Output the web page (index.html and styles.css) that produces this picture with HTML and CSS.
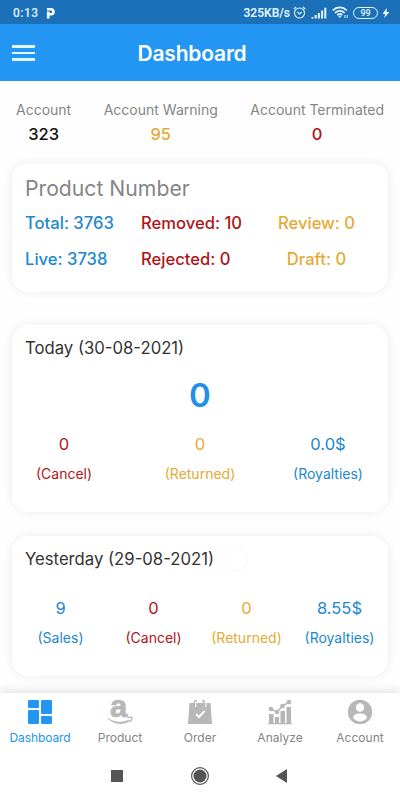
FILE: index.html
```
<!DOCTYPE html>
<html lang="en">
<head>
    <meta charset="UTF-8">
    <meta name="viewport" content="width=device-width, initial-scale=1">
    <title>Dashboard</title>
    <link rel="stylesheet" href="styles.css">
</head>
<body>
    <div class="status-bar">
        <span class="time">0:13</span>
        <svg class="p-icon" width="10" height="12" viewBox="0 0 10 12"><path d="M2.2 11.5V7M1 2.200H5a2.300 2.300 0 0 1 0 5H2.200V4.500" fill="none" stroke="#fff" stroke-width="2.600"/></svg>
        <span class="speed">325KB/s</span>
        <svg class="alarm" width="13" height="13" viewBox="0 0 13 13" fill="none" stroke="#e3f6ff" stroke-width="1.1"><circle cx="6.5" cy="7" r="5"/><path d="M.8 3 3.2 1M12.2 3 9.8 1M4.3 6l2.2 2 2.3-2"/></svg>
        <svg class="signal" width="16" height="12" viewBox="0 0 16 12" stroke="#e3f6ff" stroke-width="2"><path d="M1.500 11.500V10M4.700 11.500V8M7.900 11.500V6M11.100 11.500V3.500M14.300 11.500V.8"/></svg>
        <svg class="wifi" width="17" height="13" viewBox="0 0 17 13"><g fill="none" stroke="#e3f6ff" stroke-width="1.7"><path d="M.8 4.300a10 10 0 0 1 14 0M3 6.800a7 7 0 0 1 9.600 0M5.200 9.100a4 4 0 0 1 5.200 0"/><path d="M13 9v3M15.200 9v3" stroke-width="1"/></g><path d="m7.800 12-1.700-2q1.700-1 3.400 0z" fill="#e3f6ff"/></svg>
        <span class="battery">99</span>
        <svg class="bolt" width="8" height="12" viewBox="0 0 8 12"><path d="M5 .8.500 7h2.800L2 11.200 7.400 5H4.300z" fill="#fff"/></svg>
    </div>

    <header class="app-bar">
        <div class="menu"><i></i><i></i><i></i></div>
        <h1>Dashboard</h1>
    </header>

    <main>
        <div class="accounts">
            <div>Account<b class="black">323</b></div>
            <div>Account Warning<b class="yellow">95</b></div>
            <div>Account Terminated<b class="red">0</b></div>
        </div>

        <section class="card products">
            <h2>Product Number</h2>
            <div class="product-grid">
                <span class="blue">Total: 3763</span>
                <span class="red">Removed: 10</span>
                <span class="yellow center">Review: 0</span>
                <span class="blue">Live: 3738</span>
                <span class="red">Rejected: 0</span>
                <span class="yellow center">Draft: 0</span>
            </div>
        </section>

        <section class="card today">
            <h3>Today (30-08-2021)</h3>
            <div class="total">0</div>
            <div class="stats three">
                <div class="red"><b>0</b>(Cancel)</div>
                <div class="yellow"><b>0</b>(Returned)</div>
                <div class="blue"><b>0.0$</b>(Royalties)</div>
            </div>
        </section>

        <section class="card yesterday">
            <h3>Yesterday (29-08-2021)<span class="ripple"></span></h3>
            <div class="stats four">
                <div class="blue"><b>9</b>(Sales)</div>
                <div class="red"><b>0</b>(Cancel)</div>
                <div class="yellow"><b>0</b>(Returned)</div>
                <div class="blue"><b>8.55$</b>(Royalties)</div>
            </div>
        </section>
    </main>

    <nav class="tabs">
        <a class="active">
            <svg width="26" height="26" viewBox="0 0 26 26" fill="currentColor"><rect x="1" y="1" width="11" height="8" rx="1.3"/><rect x="1" y="11" width="11" height="14" rx="1.3"/><rect x="14" y="1" width="11" height="14" rx="1.3"/><rect x="14" y="17" width="11" height="8" rx="1.3"/></svg>
            Dashboard
        </a>
        <a>
            <svg class="amazon" width="26" height="26" viewBox="0 0 26 26"><text class="amazon-a" x="3" y="18">a</text><path d="M.7 19.500q11 6.500 21.500 1.600l.7 1Q11.500 28.500.7 19.500z" fill="#b7b7b7" stroke="#b7b7b7" stroke-width=".6"/><path d="M20.500 18.800q3-1.200 4.500-.4.300 1.900-1.700 4.500" fill="none" stroke="#b7b7b7" stroke-width="1.300"/></svg>
            Product
        </a>
        <a>
            <svg width="26" height="26" viewBox="0 0 26 26"><path d="M2.500 4H23.500L25 25H1z" fill="#b7b7b7"/><g fill="none"><path d="M8.800 8V3.500M18.800 8V3.500" stroke="#fff" stroke-width="1.200"/><path d="M7.300 7.500V4a2.500 2.500 0 0 1 2.700-2.500M17.500 7.500V4A2.500 2.500 0 0 0 15 1.500" stroke="#b7b7b7" stroke-width="1.500"/><path d="m9 15 3 3 5.700-6" stroke="#fff" stroke-width="2"/></g></svg>
            Order
        </a>
        <a>
            <svg width="26" height="26" viewBox="0 0 26 26" fill="#b7b7b7"><path d="M1 24h24v1.200H1zM2 15h4.500v9H2zM8 18h4v6H8zM13.500 12H18v12h-4.500zM19.500 8H24v16h-4.500z"/><path d="m4 10 6 3 5.500-6L22 3" fill="none" stroke="#b7b7b7" stroke-width="1.500"/><circle cx="4" cy="10" r="2.300"/><circle cx="10" cy="13" r="2.300"/><circle cx="15.500" cy="7" r="2.300"/><circle cx="22" cy="3" r="2.300"/></svg>
            Analyze
        </a>
        <a>
            <svg width="26" height="26" viewBox="0 0 26 26"><circle cx="13" cy="13" r="12.200" fill="#b7b7b7"/><circle cx="13" cy="8.500" r="4.200" fill="#fff"/><path d="M6 18.700c0-5.600 14-5.600 14 0-3.200 5-10.800 5-14 0z" fill="#fff"/></svg>
            Account
        </a>
    </nav>

    <div class="system-nav">
        <svg width="20" height="20" viewBox="0 0 20 20"><path d="M4 4h12v12H4z"/></svg>
        <svg width="20" height="20" viewBox="0 0 20 20"><circle cx="10" cy="10" r="8.400" fill="none" stroke="#555" stroke-width="1.200"/><circle cx="10" cy="10" r="6.500"/></svg>
        <svg width="20" height="20" viewBox="0 0 20 20"><path d="M14 3v14L3 10z"/></svg>
    </div>
</body>
</html>
```

FILE: styles.css
```
* {
    box-sizing: border-box;
}

body {
    margin: 0;
    height: 800px;
    display: flex;
    flex-direction: column;
    overflow: hidden;
    background: #fefefe;
    font-family: Inter, sans-serif;
    color: #333;
}

h1, h2, h3 {
    margin: 0;
    font-weight: 400;
}

b {
    display: block;
    font-weight: 400;
}

.black { color: #111; }
.blue { color: #2188cd; }
.red { color: #ae1519; }
.yellow { color: #e5aa35; }

/* top bars */
.status-bar {
    height: 24px;
    flex: none;
    display: flex;
    align-items: center;
    padding: 1px 10px 0 13px;
    background: #1b70b8;
    color: #e3f6ff;
    font: 500 12px Roboto, sans-serif;
}

.time {
    letter-spacing: 0.5px;
}

.p-icon {
    margin-left: 7px;
}

.speed {
    margin-left: auto;
    font-weight: 600;
}

.alarm { margin-left: 3px; }
.signal { margin-left: 5px; }
.wifi { margin-left: 5px; }

.battery {
    width: 25px;
    height: 12px;
    margin-left: 4px;
    border: 1px solid #e3f6ff;
    border-radius: 6px;
    font-size: 9px;
    line-height: 10px;
    text-align: center;
}

.bolt {
    margin-left: 4px;
}

.app-bar {
    height: 57px;
    flex: none;
    display: grid;
    grid-template-columns: 48px 1fr 64px;
    align-items: center;
    padding-top: 1px;
    background: #2395f2;
    color: #fff;
}

.app-bar h1 {
    font-size: 21px;
    font-weight: 600;
    letter-spacing: -0.2px;
    text-align: center;
}

.menu {
    display: grid;
    gap: 4px;
    width: 23px;
    margin-left: 12px;
}

.menu i {
    height: 2.5px;
    background: #e3f6ff;
}

/* content */
main {
    flex: 1;
    min-height: 0;
    overflow: hidden;
    padding: 0 12px;
}

.accounts {
    display: flex;
    justify-content: space-between;
    height: 82px;
    padding: 19px 4px 0;
    color: #858585;
    font-size: 14px;
    line-height: 20px;
    text-align: center;
}

.accounts b {
    margin-top: 3px;
    font-size: 16.5px;
    line-height: 22px;
    font-weight: 450;
}

.card {
    border-radius: 16px;
    background: #fff;
    box-shadow: 0 0 10px rgba(0, 0, 0, 0.08);
}

.card h3 {
    display: flex;
    align-items: center;
    padding-left: 13px;
    font-size: 16.7px;
    line-height: 24px;
}

.products {
    height: 129px;
    margin-bottom: 33px;
    padding: 11px 13px 0;
}

.products h2 {
    color: #858585;
    font-size: 21.2px;
    line-height: 28px;
}

.product-grid {
    display: grid;
    grid-template-columns: 116px 117px 117px;
    row-gap: 12px;
    margin-top: 9px;
    font-size: 16.6px;
    font-weight: 450;
    line-height: 24px;
    white-space: nowrap;
}

.center {
    text-align: center;
}

.today {
    height: 187px;
    margin-bottom: 24px;
    padding-top: 11px;
}

.total {
    margin-top: 13px;
    color: #2490e5;
    font-size: 33px;
    font-weight: 600;
    line-height: 44px;
    text-align: center;
}

.stats {
    display: grid;
    font-size: 14px;
    line-height: 20px;
    text-align: center;
}

.stats b {
    margin-bottom: 10px;
    font-size: 16.5px;
}

.three {
    grid-template-columns: 80px 192px 64px;
    justify-content: center;
    padding-right: 16px;
    margin-top: 17px;
}

.three div {
    justify-self: center;
    white-space: nowrap;
}

.four {
    grid-template-columns: repeat(4, 93px);
    justify-content: center;
    margin-top: 27px;
}

.yesterday {
    height: 140px;
    padding-top: 11px;
}

/* faint touch ripple next to the date */
.ripple {
    width: 23px;
    height: 23px;
    margin-left: 11px;
    border: 1px solid #f7f7f7;
    border-radius: 50%;
}

/* bottom bars */
.tabs {
    position: relative;
    height: 60px;
    flex: none;
    display: grid;
    grid-template-columns: repeat(5, 1fr);
    padding-top: 6px;
    background: #fff;
    box-shadow: 0 -1px 10px rgba(0, 0, 0, 0.14);
}

.tabs a {
    display: flex;
    flex-direction: column;
    align-items: center;
    color: #858585;
    font-size: 12px;
    line-height: 16px;
    gap: 5px;
}

.tabs .active {
    color: #2395f2;
    letter-spacing: -0.1px;
}

.amazon {
    overflow: visible;
}

.amazon-a {
    fill: #b7b7b7;
    stroke: #b7b7b7;
    stroke-width: 0.7px;
    font: bold 31px "Liberation Sans", sans-serif;
}

.system-nav {
    position: relative;
    height: 47px;
    flex: none;
    display: flex;
    justify-content: center;
    gap: 63px;
    padding-top: 13px;
    background: #fff;
    fill: #555;
}
```
